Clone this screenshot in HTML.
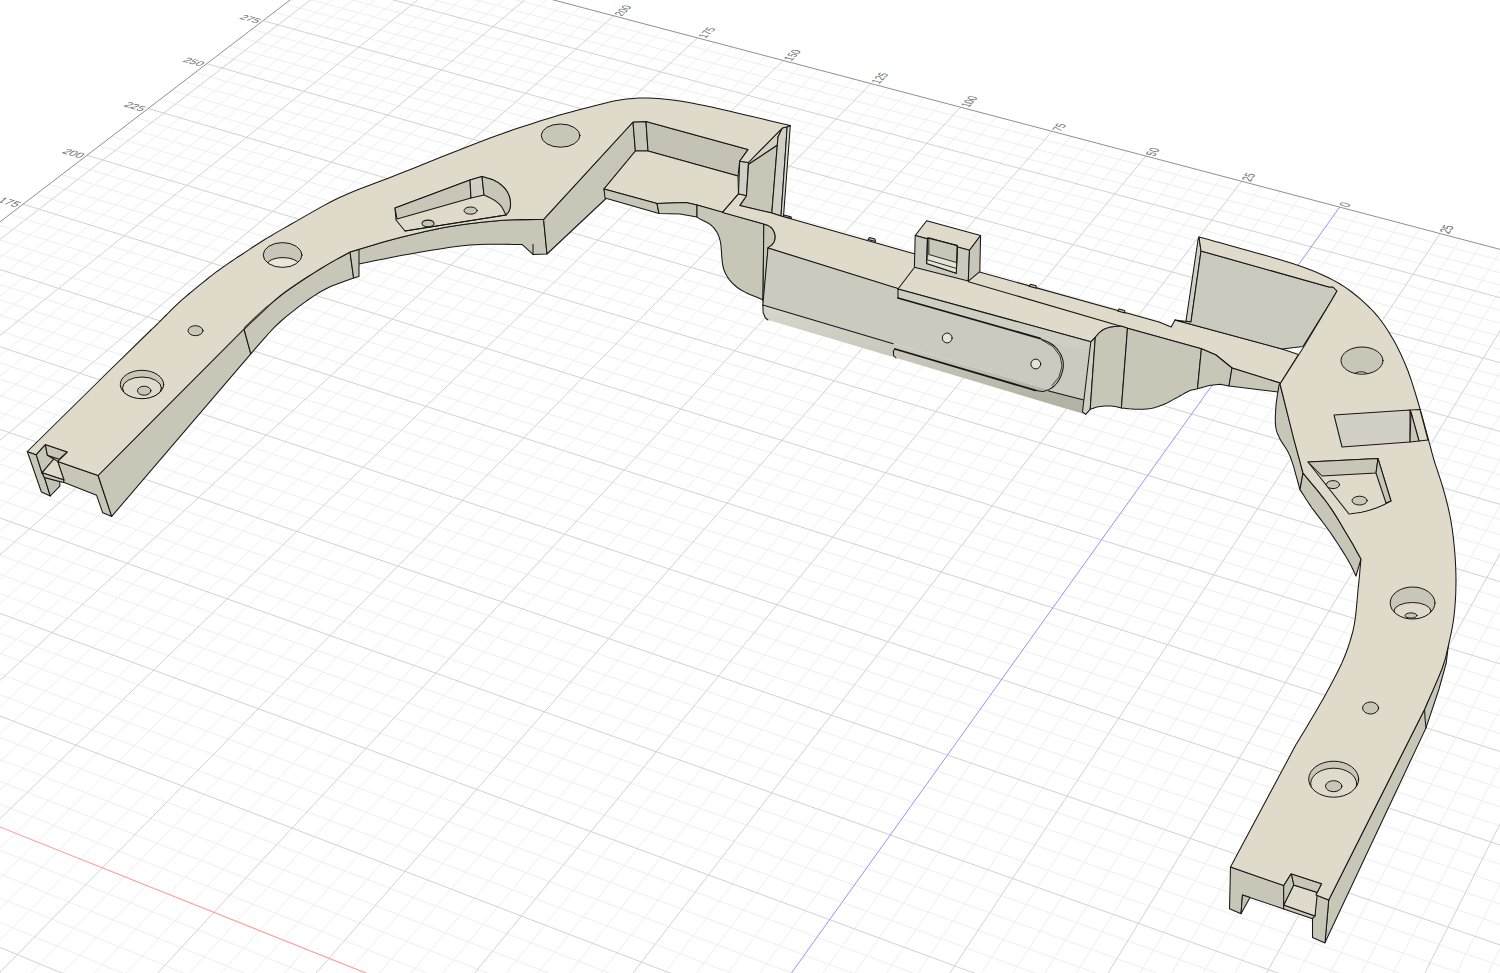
<!DOCTYPE html>
<html lang="en"><head><meta charset="utf-8"><title>Viewport</title>
<style>html,body{margin:0;padding:0;background:#fff;overflow:hidden}svg{display:block}</style></head>
<body>
<svg width="1500" height="973" viewBox="0 0 1500 973" style="font-family:'Liberation Sans',sans-serif">
<rect width="1500" height="973" fill="#ffffff"/>
<g shape-rendering="auto">
<path d="M1504 940.2L1486.2 977M1504 876.8L1454.5 977M1504 757.8L1391.1 977M1504 701.9L1359.4 977M1504 648.2L1327.7 977M1504 596.5L1296 977M1504 499L1232.6 977M1504 452.9L1200.9 977M1504 408.4L1169.2 977M1504 365.6L1137.4 977M1504 284.2L1074 977M1501.4 249.7L1042.3 977M1480.8 244.3L1010.6 977M1460.4 238.9L978.9 977M1419.8 228.2L915.4 977M1399.6 222.9L883.7 977M1379.5 217.6L852 977M1359.5 212.3L820.3 977M1319.9 201.9L756.9 977M1300.2 196.7L725.1 977M1280.5 191.5L693.4 977M1261 186.4L661.7 977M1222.3 176.1L598.2 977M1203 171.1L566.5 977M1183.8 166L534.8 977M1164.8 161L503.1 977M1126.9 151L439.6 977M1108 146.1L407.9 977M1089.3 141.1L376.1 977M1070.7 136.2L344.4 977M1033.6 126.4L281 977M1015.2 121.6L249.2 977M996.9 116.8L217.5 977M978.7 112L185.8 977M942.4 102.4L122.3 977M924.4 97.7L90.5 977M906.5 93L58.8 977M888.7 88.3L27.1 977M853.3 78.9L-4 944.3M835.7 74.3L-4 912.9M818.1 69.7L-4 882.2M800.7 65.1L-4 852.2M766 56L-4 793.9M748.8 51.4L-4 765.6M731.7 46.9L-4 737.9M714.6 42.4L-4 710.7M680.7 33.5L-4 657.9M663.8 29L-4 632.3M647.1 24.6L-4 607.2M630.3 20.2L-4 582.5M597.1 11.5L-4 534.5M580.6 7.1L-4 511.2M564.2 2.8L-4 488.2M547.9 -1.5L-4 465.7M508 -4L-4 421.9M486.7 -4L-4 400.6M465.3 -4L-4 379.6M443.9 -4L-4 359M401.2 -4L-4 318.8M379.8 -4L-4 299.2M358.4 -4L-4 279.9M337 -4L-4 261M-4 971L10.3 977M-4 920.9L132.2 977M-4 896.4L193.1 977M-4 872.4L254 977M-4 848.7L314.9 977M-4 802.5L436.7 977M-4 780L497.6 977M-4 757.8L558.5 977M-4 736L619.4 977M-4 693.3L741.2 977M-4 672.5L802.1 977M-4 652L863 977M-4 631.8L923.9 977M-4 592.2L1045.7 977M-4 572.9L1106.5 977M-4 553.9L1167.4 977M-4 535.1L1228.3 977M-4 498.4L1350 977M-4 480.4L1410.9 977M-4 462.7L1471.7 977M-4 445.3L1504 967.1M-4 411.1L1504 925.7M-4 394.3L1504 905.4M-4 377.8L1504 885.4M-4 361.5L1504 865.7M-4 329.6L1504 827.1M-4 313.9L1504 808.1M-4 298.5L1504 789.4M-4 283.2L1504 771M-4 253.3L1504 734.8M-4 238.7L1504 717M-3.3 224.4L1504 699.5M9.9 214.3L1504 682.2M36.1 194.3L1504 648.3M49 184.4L1504 631.6M61.8 174.6L1504 615.2M74.5 164.9L1504 598.9M99.5 145.8L1504 567.1M111.8 136.3L1504 551.4M124.1 127L1504 535.9M136.2 117.7L1504 520.6M160.2 99.4L1504 490.6M172 90.3L1504 475.9M183.7 81.4L1504 461.3M195.3 72.5L1504 446.9M218.3 54.9L1504 418.5M229.6 46.2L1504 404.6M240.9 37.6L1504 390.9M252 29.1L1504 377.3M274.1 12.3L1504 350.5M284.9 4L1504 337.3M296.8 -4L1504 324.3M337.8 -4L1504 311.4M419.7 -4L1504 286.1M460.7 -4L1504 273.7M501.6 -4L1504 261.3" stroke="#eeeeee" stroke-width="1" fill="none"/>
<path d="M1504 816.1L1422.8 977M1504 546.8L1264.3 977M1504 324.2L1105.7 977M1440 233.5L947.2 977M1241.6 181.2L630 977M1145.8 156L471.3 977M1052.1 131.3L312.7 977M960.5 107.2L154 977M870.9 83.6L-4 976.3M783.3 60.5L-4 822.7M697.6 37.9L-4 684.1M613.7 15.8L-4 558.3M529.4 -4L-4 443.6M422.5 -4L-4 338.7M315.6 -4L-4 242.4M-4 945.7L71.2 977M-4 714.5L680.3 977M-4 611.9L984.8 977M-4 516.6L1289.1 977M-4 428L1504 946.3M-4 345.4L1504 846.3M-4 268.2L1504 752.8M23.1 204.2L1504 665.2M87 155.3L1504 582.9M148.2 108.5L1504 505.5M206.9 63.7L1504 432.6M263.1 20.7L1504 363.8M378.7 -4L1504 298.7" stroke="#d2d2d2" stroke-width="1" fill="none"/>
<line x1="1339.7" y1="207.1" x2="788.6" y2="977" stroke="#9494ff" stroke-width="1.0"/>
<line x1="-4" y1="825.4" x2="375.8" y2="977" stroke="#ff9a9a" stroke-width="1.1"/>
<line x1="295.3" y1="-4" x2="-4" y2="224.9" stroke="#909090" stroke-width="1.0"/>
<line x1="538.5" y1="-4" x2="1504" y2="250.4" stroke="#909090" stroke-width="1.0"/>
</g>
<g>
<text transform="matrix(3.1804 0.8813 -2.2105 1.6888 256.72 23.38)" font-size="3.4" text-anchor="end" fill="#6e6e6e">275</text>
<text transform="matrix(3.2227 0.9187 -2.3046 1.7607 200.29 66.49)" font-size="3.4" text-anchor="end" fill="#6e6e6e">250</text>
<text transform="matrix(3.2657 0.9586 -2.4048 1.8373 141.44 111.45)" font-size="3.4" text-anchor="end" fill="#6e6e6e">225</text>
<text transform="matrix(3.3095 1.0011 -2.5117 1.9189 80.00 158.39)" font-size="3.4" text-anchor="end" fill="#6e6e6e">200</text>
<text transform="matrix(3.3539 1.0465 -2.6259 2.0062 15.79 207.44)" font-size="3.4" text-anchor="end" fill="#6e6e6e">175</text>
<text transform="matrix(1.9028 -1.6770 3.3245 0.8752 621.42 16.44)" font-size="3.4" text-anchor="start" fill="#6e6e6e">200</text>
<text transform="matrix(1.8535 -1.7135 3.3965 0.8942 705.43 38.55)" font-size="3.4" text-anchor="start" fill="#6e6e6e">175</text>
<text transform="matrix(1.8016 -1.7511 3.4710 0.9138 791.27 61.15)" font-size="3.4" text-anchor="start" fill="#6e6e6e">150</text>
<text transform="matrix(1.7470 -1.7900 3.5479 0.9340 879.00 84.25)" font-size="3.4" text-anchor="start" fill="#6e6e6e">125</text>
<text transform="matrix(1.6895 -1.8302 3.6273 0.9549 968.68 107.86)" font-size="3.4" text-anchor="start" fill="#6e6e6e">100</text>
<text transform="matrix(1.6289 -1.8718 3.7095 0.9766 1060.39 132.00)" font-size="3.4" text-anchor="start" fill="#6e6e6e">75</text>
<text transform="matrix(1.5651 -1.9148 3.7945 0.9990 1154.18 156.69)" font-size="3.4" text-anchor="start" fill="#6e6e6e">50</text>
<text transform="matrix(1.4979 -1.9593 3.8825 1.0221 1250.14 181.96)" font-size="3.4" text-anchor="start" fill="#6e6e6e">25</text>
<text transform="matrix(1.4271 -2.0054 3.9735 1.0461 1348.33 207.81)" font-size="3.4" text-anchor="start" fill="#6e6e6e">0</text>
<text transform="matrix(1.3526 -2.0531 4.0678 1.0709 1448.84 234.27)" font-size="3.4" text-anchor="start" fill="#6e6e6e">25</text>
</g>
<g stroke-linejoin="round" stroke-linecap="round">
<polygon points="36.2,454.7 45.2,444.6 67.4,452 57.8,461.4 64.1,479.9 42,472.8" fill="#c8c6b7" stroke="none" stroke-width="1.05"/>
<polygon points="27.3,451.5 36.2,454.7 42,472.8 44.4,477.4 50.3,496 41.4,492" fill="#c8c6b7" stroke="#161616" stroke-width="1.05"/>
<polygon points="44.4,477.4 50.3,496 59.8,486.2 59.8,481.5" fill="#c3c2b5" stroke="#161616" stroke-width="1.05"/>
<polygon points="45.2,444.6 67.4,452 59.3,459.2 47.2,455.2" fill="#c8c6b7" stroke="#161616" stroke-width="1.05"/>
<polygon points="36.2,454.7 45.2,444.6 47.2,455.2 53.8,459 42,472.8" fill="#c8c6b7" stroke="#161616" stroke-width="1.05"/>
<polygon points="42,472.8 53.8,459 57.8,461.4 64.1,479.9" fill="#dfdaca" stroke="#161616" stroke-width="1.05"/>
<polygon points="42,472.8 64.1,479.9 63.4,482.4 44.4,477.4" fill="#c8c6b7" stroke="#161616" stroke-width="1.05"/>
<polygon points="57.8,461.4 98.1,475.5 111.7,516.4 102.7,512.8 96.6,495.3 63.6,482.2 64.1,479.9" fill="#c8c6b7" stroke="#161616" stroke-width="1.05"/>
<polygon points="98.1,475.5 244,329 250.8,353.8 111.7,516.4" fill="#c8c6b7" stroke="#161616" stroke-width="1.05"/>
<polygon points="244,329 250,323.4 255.9,317.8 261.8,312.1 267.7,306.6 273.8,301.2 280,296 286.6,291 293.4,286.2 300.4,281.5 307.3,277 313.9,272.9 320,269 325.6,265.6 330.7,262.6 335.6,259.9 340.4,257.3 345.1,254.7 350,252 353.6,278 348.1,280.1 342.6,282.1 337.2,284 331.7,286.1 326,288.7 320,292 313.6,296.1 306.7,300.8 299.7,305.9 292.8,311.3 286.1,316.7 280,322 274.5,327.2 269.5,332.5 264.7,337.8 260.1,343.1 255.5,348.4 250.8,353.8" fill="#c8c6b7" stroke="#161616" stroke-width="1.05"/>
<polygon points="350,252 358.3,249.5 366.7,247 375,244.5 383.3,242.1 391.7,239.7 400,237.5 408.3,235.4 416.7,233.4 425,231.5 433.3,229.7 441.7,228 450,226.5 458.4,225.2 466.9,223.9 475.4,222.9 483.8,222 492,221.2 500,220.5 507.6,220 515,219.8 522.2,219.6 529.3,219.6 536.4,219.5 543.6,219.4 547,254 533,254.4 522,244.4 513.4,244.4 505,244.3 496.5,244.2 487.9,244.2 479.1,244.4 470,245 460.4,246 450.3,247.3 439.9,248.9 429.6,250.6 419.6,252.3 410,254 401,255.6 392.3,257.3 383.9,258.9 375.7,260.6 367.4,262.3 359,264" fill="#c8c6b7" stroke="#161616" stroke-width="1.05"/>
<polyline points="533,244.6 533,254.4" fill="none" stroke="#161616" stroke-width="1.05"/>
<polygon points="350,252 359,249.6 359,276.6 353.6,278" fill="#c8c6b7" stroke="#161616" stroke-width="1.05"/>
<polygon points="543.6,219.4 633,122 635.4,151 604,189 606,198.5 547,254" fill="#c8c6b7" stroke="#161616" stroke-width="1.05"/>
<polygon points="633,122 646,121.6 648,151 635.4,151" fill="#c8c6b7" stroke="#161616" stroke-width="1.05"/>
<polygon points="646,121.6 748,149.6 739.7,161.2 738,176 648,151" fill="#c3c2b5" stroke="#161616" stroke-width="1.05"/>
<polygon points="635.4,151 648,151 738,176 738.5,193.9 722.5,212.4 697,205 686,202.4 657,203.6 604,189" fill="#dfdaca" stroke="#161616" stroke-width="1.05"/>
<polygon points="739.7,161.2 748.4,162.5 746.5,195.8 738.5,193.9" fill="#d2d0c4" stroke="#161616" stroke-width="1.05"/>
<polygon points="604,189 657,203.6 659,213.6 605,198" fill="#c8c6b7" stroke="#161616" stroke-width="1.05"/>
<polygon points="657,203.6 686,202.4 697,205 697,217 680,214 659,213.6" fill="#c8c6b7" stroke="#161616" stroke-width="1.05"/>
<polygon points="697,205 722,212 763.8,224.1 763,300 758.7,298.1 754.3,296.2 749.8,294.4 745.5,292.4 741.5,290.3 738,288 734.9,285.5 732.1,282.9 729.7,280.1 727.5,277.1 725.6,273.8 724,270 722.8,265.5 722.1,260.3 721.6,254.8 721.3,249.3 720.8,244.2 720,240 718.9,236.7 717.8,233.9 716.5,231.6 715.1,229.6 713.6,227.7 712,226 710.1,224.4 708,223 705.7,221.8 703.5,220.7 701.5,219.8 700,219 699,218.4 698.3,218 697.9,217.7 697.7,217.5 697.4,217.3 697,217" fill="#c8c6b7" stroke="#161616" stroke-width="1.05"/>
<polygon points="763.8,224.1 764.5,224.3 765.2,224.5 765.9,224.7 766.6,224.9 767.3,225.1 768,225.5 768.8,225.9 769.5,226.4 770.3,226.9 771.1,227.5 771.9,228.2 772.5,229 773.1,230 773.7,231.1 774.2,232.3 774.7,233.5 775,234.8 775.2,236 775.2,237.2 775.1,238.4 774.9,239.6 774.5,240.8 774.1,241.9 773.5,243 772.8,243.9 771.9,244.8 771,245.6 770,246.4 769,247.2 768,248 763.6,306 763,300" fill="#c8c6b7" stroke="#161616" stroke-width="1.05"/>
<polygon points="748.4,162.5 782.3,128 778,137 777.3,145.2 748.6,164.3" fill="#d2d0c4" stroke="#161616" stroke-width="1.05"/>
<polygon points="748.6,164.3 777.3,145.2 771.8,213 739.7,205.6 746.5,195.8" fill="#c8c6b7" stroke="#161616" stroke-width="1.05"/>
<polygon points="782.3,128 787.2,126.7 781,216.1 771.8,213 777.3,145.2 778,137" fill="#d2d0c4" stroke="#161616" stroke-width="1.05"/>
<polygon points="787.2,126.7 790.3,125.5 783.5,216.7 781,216.1" fill="#dfdaca" stroke="#161616" stroke-width="1.05"/>
<polygon points="783.5,214.9 790.9,216.7 791.5,218.6 783.5,216.7" fill="#c8c6b7" stroke="#161616" stroke-width="1.05"/>
<polygon points="27.3,451.5 107.5,372.5 151,330 151.9,329.2 152.6,328.5 153.2,327.9 154.1,327.1 155.4,325.8 157.3,324 159.9,321.4 163.1,318.1 166.8,314.5 170.6,310.6 174.4,306.9 178.1,303.4 181.6,300.2 185.2,297.1 188.8,294 192.3,291.1 195.9,288.1 199.5,285.2 203.1,282.3 206.6,279.5 210.2,276.7 213.8,273.9 217.3,271.2 220.9,268.6 224.5,266.1 228,263.6 231.5,261.2 235.1,258.9 238.6,256.5 242.2,254.2 245.7,251.9 249.1,249.6 252.6,247.3 256.1,245 259.7,242.7 263.6,240.3 267.4,237.9 271.2,235.7 275,233.4 279.3,230.9 284.2,228.1 290,224.8 296.9,220.9 304.6,216.4 313,211.6 321.8,206.6 330.9,201.8 340.1,197.3 349.2,193.3 358.2,189.6 367.6,186 377.4,182.2 388.2,178.2 400,173.6 413.6,168.2 428.9,162 445,155.6 461.1,149.2 476.4,143.2 490,138 502,133.7 513,129.8 523.1,126.5 532.6,123.4 541.5,120.6 550,118 557.9,115.6 565.2,113.5 571.9,111.7 578.1,110 584.1,108.5 590,107 595.6,105.5 600.8,104.2 605.8,102.9 610.5,101.8 615.2,100.8 620,100 624.7,99.3 629.3,98.8 633.9,98.4 638.4,98.1 643.1,98 648,98 653,98.2 658.1,98.4 663.2,98.9 668.6,99.4 674.2,100.2 680,101 685.9,101.9 691.6,103 697.6,104.2 704.1,105.5 711.5,107.1 720,109 730,111.3 741.2,113.9 753.3,116.7 765.7,119.7 778.2,122.7 790.3,125.5 787.2,126.7 782.3,128 748.4,162.5 739.7,161.2 748,149.6 646,121.6 633,122 543.6,219.4 536.4,219.5 529.3,219.6 522.2,219.6 515,219.8 507.6,220 500,220.5 492,221.2 483.8,222 475.4,222.9 466.9,223.9 458.4,225.2 450,226.5 441.7,228 433.3,229.7 425,231.5 416.7,233.4 408.3,235.4 400,237.5 391.7,239.7 383.3,242.1 375,244.5 366.7,247 358.3,249.5 350,252 345.1,254.7 340.4,257.3 335.6,259.9 330.7,262.6 325.6,265.6 320,269 313.9,272.9 307.3,277 300.4,281.5 293.4,286.2 286.6,291 280,296 273.8,301.2 267.7,306.6 261.8,312.1 255.9,317.8 250,323.4 244,329 98.1,475.5 57.8,461.4 67.4,452 45.2,444.6 36.2,454.7" fill="#dfdaca" stroke="#161616" stroke-width="1.05"/>
<polyline points="245,327.6 257,316.2 268,306.2" fill="none" stroke="#4a4840" stroke-width="2"/>
<ellipse cx="195.5" cy="330.7" rx="7.5" ry="5" fill="#c8c6b7" stroke="#161616" stroke-width="1.0" transform="rotate(0 195.5 330.7)"/>
<clipPath id="cb1"><ellipse cx="142" cy="384.5" rx="21.7" ry="14.2"/></clipPath>
<ellipse cx="142" cy="384.5" rx="21.7" ry="14.2" fill="#c8c6b7" stroke="none"/>
<g clip-path="url(#cb1)"><ellipse cx="142" cy="388" rx="19.5" ry="11" fill="#dfdaca" stroke="#161616" stroke-width="1"/><ellipse cx="144.2" cy="390.7" rx="6.7" ry="4.5" fill="#c8c6b7" stroke="#161616" stroke-width="1"/></g>
<ellipse cx="142" cy="384.5" rx="21.7" ry="14.2" fill="none" stroke="#161616" stroke-width="1"/>
<clipPath id="cb2"><ellipse cx="282.6" cy="255" rx="19.4" ry="12.4"/></clipPath>
<ellipse cx="282.6" cy="255" rx="19.4" ry="12.4" fill="#c8c6b7" stroke="none"/>
<g clip-path="url(#cb2)"><ellipse cx="283" cy="264" rx="15.5" ry="6.4" fill="#e9e6da" stroke="#161616" stroke-width="1"/></g>
<ellipse cx="282.6" cy="255" rx="19.4" ry="12.4" fill="none" stroke="#161616" stroke-width="1"/>
<ellipse cx="560.6" cy="135.6" rx="19.4" ry="11.6" fill="#c8c6b7" stroke="#161616" stroke-width="1.0" transform="rotate(0 560.6 135.6)"/>
<polygon points="395,208 470,180 482,176.6 483.7,177.1 485.4,177.5 487.1,178 488.8,178.4 490.4,178.9 492,179.5 493.5,180.1 494.9,180.8 496.2,181.6 497.6,182.3 498.8,183.1 500,184 501.1,184.9 502.2,185.9 503.3,186.8 504.3,187.9 505.2,188.9 506,190 506.8,191.1 507.4,192.2 508.1,193.4 508.6,194.6 509.1,195.8 509.5,197 509.8,198.3 510.1,199.7 510.3,201.1 510.4,202.4 510.5,203.8 510.5,205 510.4,206.1 510.2,207.2 510,208.2 509.7,209.2 509.4,210.1 509,211 508.6,211.8 508.1,212.5 507.6,213.1 507.1,213.7 506.5,214.4 506,215 405,231 396,220" fill="#dfdaca" stroke="#161616" stroke-width="1.05"/>
<polygon points="395,208 470,180 471,198 397,219" fill="#c8c6b7" stroke="#161616" stroke-width="1.05"/>
<polygon points="470,180 482,176.6 484,195 471,198" fill="#d2d0c4" stroke="#161616" stroke-width="1.05"/>
<polygon points="482,176.6 483.7,177.1 485.4,177.5 487.1,178 488.8,178.4 490.4,178.9 492,179.5 493.5,180.1 494.9,180.8 496.2,181.6 497.6,182.3 498.8,183.1 500,184 501.1,184.9 502.2,185.9 503.3,186.8 504.3,187.9 505.2,188.9 506,190 506.8,191.1 507.4,192.2 508.1,193.4 508.6,194.6 509.1,195.8 509.5,197 509.8,198.3 510.1,199.7 510.3,201.1 510.4,202.4 510.5,203.8 510.5,205 510.4,206.1 510.2,207.2 510,208.2 509.7,209.2 509.4,210.1 509,211 508.6,211.8 508.1,212.5 507.6,213.1 507.1,213.7 506.5,214.4 506,215 505.2,213.5 504.4,211.9 503.6,210.3 502.8,208.8 501.9,207.3 501,206 500,204.8 498.9,203.7 497.8,202.8 496.6,201.8 495.4,200.9 494,200 492.5,199.1 490.9,198.3 489.2,197.4 487.4,196.6 485.7,195.8 484,195" fill="#c8c6b7" stroke="#161616" stroke-width="1.05"/>
<clipPath id="pkl"><polygon points="395,208 470,180 482,176.6 483.7,177.1 485.4,177.5 487.1,178 488.8,178.4 490.4,178.9 492,179.5 493.5,180.1 494.9,180.8 496.2,181.6 497.6,182.3 498.8,183.1 500,184 501.1,184.9 502.2,185.9 503.3,186.8 504.3,187.9 505.2,188.9 506,190 506.8,191.1 507.4,192.2 508.1,193.4 508.6,194.6 509.1,195.8 509.5,197 509.8,198.3 510.1,199.7 510.3,201.1 510.4,202.4 510.5,203.8 510.5,205 510.4,206.1 510.2,207.2 510,208.2 509.7,209.2 509.4,210.1 509,211 508.6,211.8 508.1,212.5 507.6,213.1 507.1,213.7 506.5,214.4 506,215 405,231 396,220"/></clipPath>
<ellipse cx="470.6" cy="210.6" rx="6.6" ry="3.6" fill="#c8c6b7" stroke="#161616" stroke-width="1.0" transform="rotate(0 470.6 210.6)"/>
<g clip-path="url(#pkl)"><ellipse cx="428" cy="223.4" rx="6" ry="3.3" fill="#c8c6b7" stroke="#161616" stroke-width="1.1"/></g>
<polyline points="405,231 506,215" fill="none" stroke="#161616" stroke-width="1.05"/>
<defs><linearGradient id="fil" x1="0" y1="0" x2="0.25" y2="1"><stop offset="0" stop-color="#d9d7cc"/><stop offset="0.55" stop-color="#c9c7bb"/><stop offset="1" stop-color="#b4b2a3"/></linearGradient></defs>
<polygon points="739.7,205.6 771.8,213 781,216.1 915,254 1159,322 1171.2,327 1175,319.9 1282,349 1298.5,354.5 1280,384 1280,383 1232,368 1216,355 1201.4,348.8 1127.5,328.3 1121.7,326.3 1111.4,327 1102.4,330.2 1095.3,337.3 1090.8,341.8 898,289 768,248 769,247.2 770,246.4 771,245.6 771.9,244.8 772.8,243.9 773.5,243 774.1,241.9 774.5,240.8 774.9,239.6 775.1,238.4 775.2,237.2 775.2,236 775,234.8 774.7,233.5 774.2,232.3 773.7,231.1 773.1,230 772.5,229 771.9,228.2 771.1,227.5 770.3,226.9 769.5,226.4 768.8,225.9 768,225.5 767.3,225.1 766.6,224.9 765.9,224.7 765.2,224.5 764.5,224.3 763.8,224.1 722.5,212.4 738.5,193.9 746.5,195.8" fill="#dfdaca" stroke="#161616" stroke-width="1.05"/>
<polygon points="868,239.5 869.5,237.5 875,239 875.5,241.5" fill="#c8c6b7" stroke="#161616" stroke-width="1.05"/>
<polygon points="1029,286.3 1030.5,284.3 1036,285.8 1036.5,288.3" fill="#c8c6b7" stroke="#161616" stroke-width="1.05"/>
<polygon points="1117.6,311 1119.1,309 1124.6,310.5 1125.1,313" fill="#c8c6b7" stroke="#161616" stroke-width="1.05"/>
<polyline points="968.4,281.8 1120.8,326.2" fill="none" stroke="#161616" stroke-width="1.05"/>
<polygon points="768,248 898,288.5 898,298 1039.9,338.3 1091.2,342 1090.8,341.8 1083.6,400 910,348.4 762.8,305.1" fill="#cbcabe" stroke="none" stroke-width="1.05"/>
<polygon points="762.8,305.1 893.2,343.5 1083.6,400 1082.5,411.8 1085.7,414.4 893,357 770,320.5 765.5,318 763.2,313" fill="url(#fil)"/>
<polyline points="768,248 762.8,305.1 763.2,313 765.5,318 768,320" fill="none" stroke="#161616" stroke-width="1.05"/>
<polyline points="768,248 898,288.5" fill="none" stroke="#161616" stroke-width="1.05"/>
<polyline points="762.8,305.1 893.2,343.8" fill="none" stroke="#161616" stroke-width="1.05"/>
<polyline points="1048.7,391.1 1083.9,400" fill="none" stroke="#161616" stroke-width="1.05"/>
<polygon points="898,289 1090.8,341.8 1089.8,350 1062,346 1039.9,338.3 898,298" fill="#cfcec2" stroke="none" stroke-width="1.05"/>
<polyline points="898,298 898,289 1090.8,341.8" fill="none" stroke="#161616" stroke-width="1.05"/>
<polyline points="898,289 914,268" fill="none" stroke="#161616" stroke-width="1.05"/>
<polyline points="898,298 1039.9,338.3" fill="none" stroke="#161616" stroke-width="1.8"/>
<polyline points="1039.9,338.3 1042.1,339.4 1044.5,340.4 1046.8,341.4 1049,342.5 1051.1,343.7 1053,345 1054.7,346.5 1056.3,348.1 1057.7,349.7 1058.9,351.5 1060.1,353.2 1061,355 1061.8,356.8 1062.4,358.6 1062.9,360.4 1063.2,362.2 1063.3,364.1 1063.3,366 1063.1,368 1062.8,370 1062.2,372.1 1061.6,374.2 1060.8,376.2 1060,378 1059.1,379.7 1058,381.4 1056.9,383 1055.6,384.5 1054.3,385.8 1053,387 1051.6,388 1050.1,388.9 1048.6,389.7 1047,390.3 1045.5,390.8 1044,391.2 1042.6,391.4 1041.1,391.3 1039.7,391.1 1038.3,390.9 1036.9,390.6 1035.5,390.4" fill="none" stroke="#161616" stroke-width="1.05"/>
<polyline points="1041,339.5 1053,346.5 1060,356 1062,366 1059,377 1052,385.5" fill="none" stroke="#161616" stroke-width="0.8"/>
<polyline points="1035.5,390.4 895,349" fill="none" stroke="#161616" stroke-width="1.8"/>
<polyline points="895,349 893.4,351 893.6,355.5 896,358" fill="none" stroke="#161616" stroke-width="1.05"/>
<ellipse cx="947.2" cy="338" rx="4.9" ry="4.9" fill="#e6e2d4" stroke="#161616" stroke-width="1.0" transform="rotate(0 947.2 338)"/>
<ellipse cx="1035.8" cy="364" rx="4.9" ry="4.9" fill="#e6e2d4" stroke="#161616" stroke-width="1.0" transform="rotate(0 1035.8 364)"/>
<polygon points="1090.8,341.8 1095.3,337.3 1090.2,409.3 1085.7,414.4 1082.5,411.8" fill="#d2d0c4" stroke="#161616" stroke-width="1.05"/>
<polygon points="1095.3,337.3 1095.8,336.7 1096.3,336 1096.9,335.4 1097.4,334.7 1097.9,334.1 1098.5,333.5 1099.1,332.9 1099.7,332.3 1100.4,331.7 1101.1,331.2 1101.7,330.7 1102.4,330.2 1103.1,329.8 1103.7,329.4 1104.4,329.1 1105.1,328.8 1105.8,328.5 1106.5,328.2 1107.3,327.9 1108.1,327.7 1108.9,327.5 1109.7,327.3 1110.6,327.2 1111.4,327 1112.2,326.9 1113.1,326.7 1113.9,326.6 1114.8,326.5 1115.6,326.5 1116.5,326.4 1117.4,326.3 1118.2,326.3 1119.1,326.2 1119.9,326.2 1120.8,326.2 1121.7,326.3 1122.6,326.5 1123.6,326.8 1124.6,327.2 1125.5,327.6 1126.5,327.9 1127.5,328.3 1121.4,408 1119.8,407.6 1118.2,407.2 1116.6,406.8 1114.9,406.5 1113.2,406.2 1111.4,406 1109.4,405.9 1107.2,406 1104.9,406.1 1102.6,406.2 1100.5,406.4 1098.6,406.7 1096.9,407 1095.5,407.4 1094.1,407.9 1092.8,408.4 1091.5,408.8 1090.2,409.3" fill="#c8c6b7" stroke="#161616" stroke-width="1.05"/>
<polygon points="1127.5,328.3 1201.4,348.8 1197.5,388.7 1196,389.1 1194.6,389.4 1193.2,389.7 1191.8,390.1 1190.2,390.6 1188.5,391.3 1186.6,392.2 1184.5,393.3 1182.3,394.6 1180.1,395.8 1177.9,397.1 1175.7,398.3 1173.6,399.4 1171.4,400.6 1169.3,401.8 1167.1,402.9 1164.9,403.9 1162.8,404.8 1160.7,405.6 1158.5,406.4 1156.4,407.1 1154.3,407.7 1152.1,408.2 1150,408.6 1147.9,408.9 1145.8,409.1 1143.7,409.3 1141.6,409.3 1139.4,409.3 1137.1,409.3 1134.6,409.2 1132.1,409 1129.4,408.8 1126.7,408.5 1124,408.2 1121.4,408" fill="#c8c6b7" stroke="#161616" stroke-width="1.05"/>
<polygon points="1201.4,348.8 1216,355 1232,368 1229,386 1220,384.2 1209.1,385.5 1197.5,388.7" fill="#c8c6b7" stroke="#161616" stroke-width="1.05"/>
<polygon points="1232,368 1280,383 1278,392 1229,386" fill="#c8c6b7" stroke="#161616" stroke-width="1.05"/>
<polygon points="915.2,235.5 926.7,220.7 980.6,235.5 969.5,250.3" fill="#dfdaca" stroke="#161616" stroke-width="1.05"/>
<polygon points="915.2,235.5 969.5,250.3 968.3,281.1 914.4,267.2" fill="#cbcabe" stroke="#161616" stroke-width="1.05"/>
<polygon points="969.5,250.3 980.6,235.5 979.8,271.7 968.3,281.1" fill="#c8c6b7" stroke="#161616" stroke-width="1.05"/>
<polygon points="927.5,238 957.4,245.6 956.3,273.3 926.7,263.5" fill="#c3c2b5" stroke="#161616" stroke-width="1.05"/>
<polygon points="929.2,254.6 956.7,262.6 956.3,273.3 926.7,263.5" fill="#e6e2d4" stroke="none" stroke-width="1.05"/>
<polygon points="929.2,237.8 957.2,245.8 956.7,262.6 929.2,254.6" fill="#c8c6b7" stroke="#161616" stroke-width="0.9"/>
<polyline points="928,260 956.4,268.4" fill="none" stroke="#161616" stroke-width="0.9"/>
<polyline points="927.5,238 957.4,245.6 956.3,273.3 926.7,263.5 927.5,238" fill="none" stroke="#161616" stroke-width="1.05"/>
<polygon points="1199,237 1198,240 1186,321 1191,322 1201,251" fill="#d2d0c4" stroke="#161616" stroke-width="1.05"/>
<polygon points="1201,251 1329,287 1333,287 1337,291 1330,303 1303,346.5 1282,349 1175,320 1191,322" fill="#cbcabe" stroke="#161616" stroke-width="1.05"/>
<polygon points="1280,384 1279,385 1278.5,388.5 1277.9,392 1277.3,395.6 1276.8,399.1 1276.3,402.6 1276,406 1275.7,409.5 1275.5,413 1275.3,416.5 1275.3,419.9 1275.4,423.1 1275.6,426 1276,428.5 1276.5,430.7 1277.1,432.6 1277.9,434.6 1278.9,436.6 1280,439 1281.4,441.5 1283.1,444.1 1284.9,446.8 1286.8,449.7 1288.6,453.1 1290.4,457 1292,461.6 1293.7,466.8 1295.2,472.4 1296.8,478.2 1298.4,484 1300,489.6 1303,473" fill="#c8c6b7" stroke="#161616" stroke-width="1.05"/>
<polygon points="1303,473 1300,489.6 1301.9,492.6 1303.8,495.5 1305.6,498.5 1307.6,501.5 1309.7,504.6 1312,508 1314.7,511.6 1317.6,515.4 1320.6,519.4 1323.8,523.5 1326.9,527.7 1330,532 1333.1,536.6 1336.4,541.5 1339.6,546.5 1342.7,551.4 1345.6,556 1348,560 1349.9,563.4 1351.4,566.2 1352.6,568.8 1353.7,571.1 1354.8,573.5 1356,576 1361,559 1358.9,555.3 1356.9,551.7 1354.9,548.1 1352.9,544.3 1350.6,540.4 1348,536 1345.1,531.2 1342,526 1338.8,520.5 1335.3,514.9 1331.7,509.4 1328,504 1324.1,498.8 1320,493.6 1315.8,488.4 1311.5,483.3 1307.2,478.2 1303,473" fill="#c8c6b7" stroke="#161616" stroke-width="1.05"/>
<polygon points="1448.3,645.9 1446.2,663.2 1439,689 1426,727.9 1325,942.5 1328.7,900 1424.6,709.2 1441.9,668.9" fill="#c8c6b7" stroke="#161616" stroke-width="1.05"/>
<polyline points="1424.6,709.2 1425,718 1426,727.9" fill="none" stroke="#161616" stroke-width="1.05"/>
<polygon points="1230.5,867 1283.7,885.5 1283.7,908.9 1242.5,895 1241,913.7 1229.5,908.7" fill="#c8c6b7" stroke="#161616" stroke-width="1.05"/>
<polygon points="1242.5,895 1250,897.5 1241,913.7" fill="#c3c2b5" stroke="#161616" stroke-width="1.05"/>
<polygon points="1283.7,905 1315,916 1312.5,918.7 1283.7,908.9" fill="#c8c6b7" stroke="#161616" stroke-width="1.05"/>
<polygon points="1316.2,895 1328.7,900 1325,943 1312.5,937.5 1312.5,918.7 1315,916" fill="#c8c6b7" stroke="#161616" stroke-width="1.05"/>
<polygon points="1283.7,905 1293.7,885 1317.4,892.6 1315,916" fill="#dfdaca" stroke="#161616" stroke-width="1.05"/>
<polygon points="1291.2,873.7 1321.7,883.7 1317.4,892.6 1293.7,885" fill="#c8c6b7" stroke="#161616" stroke-width="1.05"/>
<polygon points="1283.7,885.5 1291.2,873.7 1293.7,885 1283.7,905" fill="#c8c6b7" stroke="#161616" stroke-width="1.05"/>
<polygon points="1199,237 1206.8,239.1 1214.4,241.2 1222.1,243.3 1229.8,245.4 1237.8,247.7 1246,250 1254.8,252.5 1264,255 1273.4,257.7 1282.8,260.4 1291.7,263.2 1300,266 1307.6,268.8 1314.7,271.6 1321.5,274.5 1327.9,277.5 1334.1,280.6 1340,284 1345.7,287.6 1351.1,291.5 1356.2,295.5 1361.1,299.6 1365.7,303.8 1370,308 1374,312.1 1377.6,316.3 1380.9,320.5 1384,324.8 1387,329.3 1390,334 1392.9,338.9 1395.8,344.1 1398.5,349.4 1401.1,354.8 1403.6,360.4 1406,366 1408.3,371.8 1410.4,377.7 1412.4,383.8 1414.3,389.9 1416.2,396 1418,402 1419.8,408.2 1421.6,414.5 1423.4,420.9 1425,427 1426.6,432.8 1428,438 1429.2,442.4 1430.2,446.1 1431.1,449.5 1431.9,452.7 1432.9,456.1 1434,460 1435.3,464.3 1436.9,468.9 1438.4,473.6 1440,478.4 1441.6,483.3 1443,488 1444.3,492.7 1445.6,497.3 1446.8,502 1448,506.7 1449,511.3 1450,516 1450.9,520.6 1451.6,525 1452.3,529.5 1452.9,534.1 1453.5,538.9 1454,544 1454.5,549.5 1455,555.4 1455.4,561.5 1455.7,567.7 1455.9,573.9 1456,580 1455.9,586.1 1455.8,592.2 1455.5,598.4 1455.1,604.5 1454.6,610.4 1454,616 1453.3,621.4 1452.4,626.7 1451.4,631.8 1450.4,636.7 1449.3,641.4 1448.3,645.9 1447.4,649.9 1446.6,653.4 1445.8,656.8 1444.9,660.2 1443.6,664.1 1441.9,668.9 1439.6,674.6 1436.9,681.1 1433.9,688 1430.8,695.1 1427.6,702.3 1424.6,709.2 1328.7,900 1316,895 1321.7,883.7 1291,873.7 1283.7,885.5 1230.5,867 1296,744.6 1298.7,740.2 1301.3,735.8 1304,731.4 1306.7,727 1309.3,722.5 1312,718 1314.7,713.5 1317.3,708.9 1320,704.3 1322.7,699.7 1325.3,694.9 1328,690 1330.7,684.9 1333.6,679.6 1336.4,674.2 1339.1,668.8 1341.7,663.4 1344,658 1346.1,652.7 1348,647.5 1349.8,642.2 1351.3,637 1352.8,631.6 1354,626 1355,620.2 1355.8,614.1 1356.4,607.9 1357,601.8 1357.5,595.8 1358,590 1358.6,584.5 1359.1,579.3 1359.6,574.2 1360,569.1 1360.5,564.1 1361,559 1358.9,555.3 1356.9,551.7 1354.9,548.1 1352.9,544.3 1350.6,540.4 1348,536 1345.1,531.2 1342,526 1338.8,520.5 1335.3,514.9 1331.7,509.4 1328,504 1324.1,498.8 1320,493.6 1315.8,488.4 1311.5,483.3 1307.2,478.2 1303,473 1294,440 1280,384 1303,348 1330,303 1337,291 1333,287 1329,287 1201,251" fill="#dfdaca" stroke="#161616" stroke-width="1.05"/>
<clipPath id="cb3"><ellipse cx="1362" cy="360.6" rx="21" ry="13.6"/></clipPath>
<ellipse cx="1362" cy="360.6" rx="21" ry="13.6" fill="#c8c6b7" stroke="none"/>
<g clip-path="url(#cb3)"><ellipse cx="1361" cy="375" rx="7" ry="3.2" fill="#e9e6da" stroke="#161616" stroke-width="1"/></g>
<ellipse cx="1362" cy="360.6" rx="21" ry="13.6" fill="none" stroke="#161616" stroke-width="1"/>
<clipPath id="cb4"><ellipse cx="1412.6" cy="603" rx="22.4" ry="16"/></clipPath>
<ellipse cx="1412.6" cy="603" rx="22.4" ry="16" fill="#c8c6b7" stroke="none"/>
<g clip-path="url(#cb4)"><ellipse cx="1412.5" cy="611" rx="18.5" ry="8.5" fill="#dfdaca" stroke="#161616" stroke-width="1"/><ellipse cx="1411" cy="615.5" rx="6" ry="2.6" fill="#c8c6b7" stroke="#161616" stroke-width="1"/></g>
<ellipse cx="1412.6" cy="603" rx="22.4" ry="16" fill="none" stroke="#161616" stroke-width="1"/>
<ellipse cx="1370.6" cy="708" rx="8" ry="6" fill="#c8c6b7" stroke="#161616" stroke-width="1.0" transform="rotate(0 1370.6 708)"/>
<clipPath id="cb5"><ellipse cx="1333.7" cy="779.2" rx="25" ry="18"/></clipPath>
<ellipse cx="1333.7" cy="779.2" rx="25" ry="18" fill="#c8c6b7" stroke="none"/>
<g clip-path="url(#cb5)"><ellipse cx="1333.7" cy="783.7" rx="23" ry="15.5" fill="#dfdaca" stroke="#161616" stroke-width="1"/><ellipse cx="1333.7" cy="786.2" rx="8.2" ry="5.5" fill="#c8c6b7" stroke="#161616" stroke-width="1"/></g>
<ellipse cx="1333.7" cy="779.2" rx="25" ry="18" fill="none" stroke="#161616" stroke-width="1"/>
<polygon points="1334,415 1410,410 1410,442 1342,447" fill="#d2d0c4" stroke="#161616" stroke-width="1.05"/>
<polygon points="1410,410 1420,409.6 1428,440 1419,441" fill="#dfdaca" stroke="#161616" stroke-width="1.05"/>
<polygon points="1411,412 1419,441 1410,442" fill="#c8c6b7" stroke="#161616" stroke-width="1.05"/>
<polygon points="1308,462 1378,458.6 1391,501 1389.3,501.8 1387.7,502.7 1386.1,503.6 1384.4,504.4 1382.7,505.2 1381,506 1379.2,506.7 1377.4,507.5 1375.5,508.2 1373.6,508.8 1371.8,509.4 1370,510 1368.3,510.5 1366.6,511 1365,511.4 1363.4,511.8 1361.7,512.2 1360,512.5 1358.2,512.8 1356.4,513.1 1354.6,513.3 1352.7,513.5 1350.8,513.8 1349,514" fill="#dfdaca" stroke="#161616" stroke-width="1.05"/>
<polygon points="1308,462 1378,458.6 1376,473 1322,476" fill="#c8c6b7" stroke="#161616" stroke-width="1.05"/>
<polygon points="1378,458.6 1391,501 1386,503 1376,473" fill="#c8c6b7" stroke="#161616" stroke-width="1.05"/>
<ellipse cx="1333" cy="484.6" rx="6.6" ry="4" fill="#c8c6b7" stroke="#161616" stroke-width="1.0" transform="rotate(0 1333 484.6)"/>
<ellipse cx="1359.6" cy="500.6" rx="7.6" ry="4.4" fill="#c8c6b7" stroke="#161616" stroke-width="1.0" transform="rotate(0 1359.6 500.6)"/>
</g>
</svg>
</body></html>
